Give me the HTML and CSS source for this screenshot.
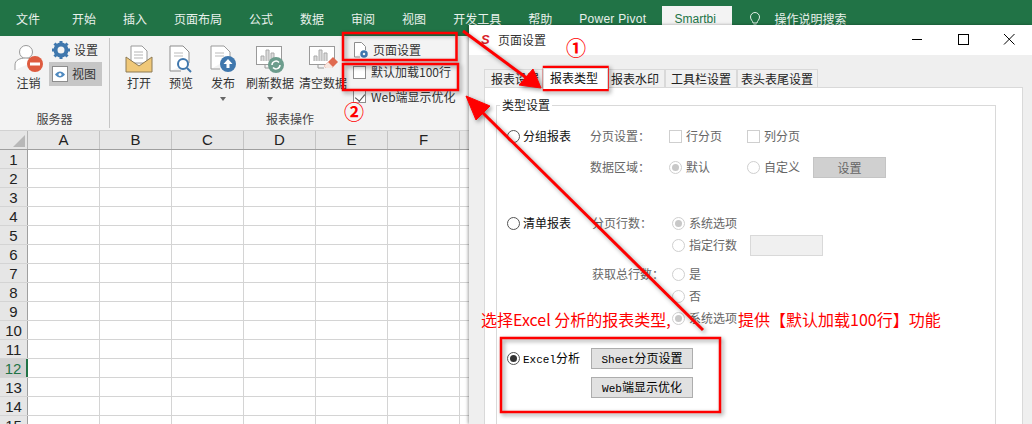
FILE: index.html
```html
<!DOCTYPE html>
<html lang="zh">
<head>
<meta charset="utf-8">
<title>页面设置</title>
<link rel="stylesheet" href="styles.css">
</head>
<body>
<div class="excel">
  <nav class="tabs">
    <span class="t first">文件</span><span class="t">开始</span><span class="t">插入</span><span class="t">页面布局</span><span class="t">公式</span><span class="t">数据</span><span class="t">审阅</span><span class="t">视图</span><span class="t">开发工具</span><span class="t">帮助</span><span class="t pp">Power Pivot</span><span class="t active">Smartbi</span>
    <svg class="bulb" width="14" height="16" viewBox="0 0 14 16"><path d="M5 12c0-2-2.500-3-2.500-6a4.500 4.500 0 0 1 9 0c0 3-2.500 4-2.500 6zM5.500 14h3" fill="none" stroke="#e4efe8"/></svg>
    <span class="t search">操作说明搜索</span>
  </nav>
  <section class="ribbon">
    <div class="group g1">
      <div class="gbody">
        <div class="big w40">
          <svg class="ico" width="30" height="30" viewBox="0 0 30 30"><circle cx="12" cy="8" r="6.500" fill="#fff" stroke="#9a9a9a"/><path d="M1 26v-5c0-5 5-7 11-7 4 0 7 1 9 3" fill="#fff" stroke="#9a9a9a"/><circle cx="21" cy="20" r="8" fill="#de5b3f"/><rect x="16" y="18.500" width="10" height="3" fill="#fff"/></svg>
          <span>注销</span>
        </div>
        <div class="smalls">
          <div class="small"><svg width="18" height="18" viewBox="0 0 18 18"><circle cx="9" cy="9" r="5.500" fill="none" stroke="#3f77ad" stroke-width="4"/><path d="M9 0v3M9 15v3M0 9h3M15 9h3M2.500 2.500l2 2M13.500 13.500l2 2M2.500 15.500l2-2M13.500 4.500l2-2" stroke="#3f77ad" stroke-width="3"/></svg><span>设置</span></div>
          <div class="small on"><svg width="16" height="16" viewBox="0 0 16 16"><rect x=".5" y=".5" width="15" height="15" fill="#fff" stroke="#8d8d8d"/><path d="M3 8.500c3-4 7-4 10 0-3 4-7 4-10 0z" fill="#4f8ac0"/><circle cx="8" cy="8.500" r="1.500" fill="#fff"/></svg><span>视图</span></div>
        </div>
      </div>
      <div class="glabel">服务器</div>
    </div>
    <div class="group g2">
      <div class="gbody">
        <div class="big w42">
          <svg class="ico" width="28" height="30" viewBox="0 0 28 30"><path d="M6 19V2h11l5 5v12z" fill="#fff" stroke="#9a9a9a"/><path d="M9 8h9M9 11h9M9 14h9" stroke="#b5b5b5"/><path d="M1 13v15h26V13l-13 9z" fill="#f0c878" stroke="#8d7a55"/></svg>
          <span>打开</span>
        </div>
        <div class="big w42">
          <svg class="ico" width="28" height="30" viewBox="0 0 28 30"><path d="M3 27V2h13l6 6v11" fill="#fff" stroke="#8d8d8d"/><path d="M3 27h11" stroke="#8d8d8d"/><path d="M7 9h9M7 12h9" stroke="#bbb"/><circle cx="16" cy="20" r="5" fill="#fff" stroke="#3f77ad" stroke-width="2"/><path d="M20 24l4 4" stroke="#3f77ad" stroke-width="2"/></svg>
          <span>预览</span>
        </div>
        <div class="big w42 drop">
          <svg class="ico" width="30" height="30" viewBox="0 0 30 30"><path d="M3 25V2h13l6 6v6" fill="#fff" stroke="#9a9a9a"/><path d="M3 25h9" stroke="#9a9a9a"/><path d="M7 9h9M7 12h9" stroke="#bbb"/><circle cx="20" cy="20" r="8" fill="#3f77ad"/><path d="M20 15l-4.500 5h3v4h3v-4h3z" fill="#fff"/></svg>
          <span>发布</span><i class="caret"></i>
        </div>
        <div class="big w52 drop">
          <svg class="ico" width="30" height="30" viewBox="0 0 30 30"><rect x="1.500" y="2.500" width="25" height="18" fill="#fff" stroke="#9a9a9a"/><path d="M6 17v-5h3v5M11 17V6h3v11M16 17V9h3v8" fill="#ddd" stroke="#aaa"/><path d="M10 21v3h8" stroke="#9a9a9a" fill="none"/><circle cx="21" cy="21" r="8" fill="#6d9d8d"/><path d="M17 21a4 4 0 0 1 7-2.500M25 21a4 4 0 0 1-7 2.500" fill="none" stroke="#fff" stroke-width="1.500"/></svg>
          <span>刷新数据</span><i class="caret"></i>
        </div>
        <div class="big w54">
          <svg class="ico" width="30" height="30" viewBox="0 0 30 30"><rect x="1.500" y="2.500" width="25" height="18" fill="#fff" stroke="#9a9a9a"/><path d="M6 17v-5h3v5M11 17V6h3v11M16 17V9h3v8" fill="#ddd" stroke="#aaa"/><path d="M10 21v3h6" stroke="#9a9a9a" fill="none"/><path d="M16 22l9-9 5 5-6 6h-6z" fill="#e0694f"/><path d="M16 22l4-4 5 5-1 1h-6z" fill="#f6e6df"/></svg>
          <span>清空数据</span>
        </div>
        <div class="smalls s2">
          <div class="small r1"><svg width="16" height="18" viewBox="0 0 16 18"><path d="M1.500 16V1.500h7l4 4V9" fill="#fff" stroke="#8d8d8d"/><path d="M1.500 16H7" stroke="#8d8d8d"/><circle cx="11" cy="13" r="2.500" fill="none" stroke="#3f77ad" stroke-width="2.500"/></svg><span>页面设置</span></div>
          <div class="small r2"><i class="box"></i><span>默认加载100行</span></div>
          <div class="small r3"><i class="box tick"></i><span>Web端显示优化</span></div>
        </div>
      </div>
      <div class="glabel">报表操作</div>
    </div>
  </section>
  <section class="sheet">
    <div class="hrow"><div class="corner"><i></i></div><b>A</b><b>B</b><b>C</b><b>D</b><b>E</b><b>F</b><b>G</b></div>
    <div class="row"><div class="rh">1</div></div>
    <div class="row"><div class="rh">2</div></div>
    <div class="row"><div class="rh">3</div></div>
    <div class="row"><div class="rh">4</div></div>
    <div class="row"><div class="rh">5</div></div>
    <div class="row"><div class="rh">6</div></div>
    <div class="row"><div class="rh">7</div></div>
    <div class="row"><div class="rh">8</div></div>
    <div class="row"><div class="rh">9</div></div>
    <div class="row"><div class="rh">10</div></div>
    <div class="row"><div class="rh">11</div></div>
    <div class="row"><div class="rh sel">12</div></div>
    <div class="row"><div class="rh">13</div></div>
    <div class="row"><div class="rh">14</div></div>
    <div class="row"><div class="rh">15</div></div>
  </section>
</div>

<div class="dialog">
  <header class="title">
    <span class="logo">S</span><span class="ttext">页面设置</span>
    <div class="wins">
      <svg width="46" height="30" viewBox="0 0 46 30"><path d="M18 14.500h10" stroke="#000"/></svg>
      <svg width="46" height="30" viewBox="0 0 46 30"><rect x="18.500" y="9.500" width="10" height="10" fill="none" stroke="#000"/></svg>
      <svg width="46" height="30" viewBox="0 0 46 30"><path d="M18 9l10.500 10.500M28.500 9L18 19.500" stroke="#000"/></svg>
    </div>
  </header>
  <div class="dbody">
    <div class="dtabs">
      <span class="dt">报表设置</span><span class="dt cur">报表类型</span><span class="dt">报表水印</span><span class="dt">工具栏设置</span><span class="dt">表头表尾设置</span>
    </div>
    <div class="panel">
      <fieldset class="fs">
        <legend>类型设置</legend>
        <div class="fr f1"><label class="main"><i class="radio"></i>分组报表</label><span class="lab">分页设置：</span><span class="opt"><i class="cb"></i>行分页</span><span class="opt"><i class="cb"></i>列分页</span></div>
        <div class="fr f2"><span class="main"></span><span class="lab">数据区域：</span><span class="opt"><i class="radio dis dot"></i>默认</span><span class="opt w66"><i class="radio dis"></i>自定义</span><span class="gbtn">设置</span></div>
        <div class="fr f3"><label class="main"><i class="radio"></i>清单报表</label><span class="lab lab2">分页行数：</span><span class="opt"><i class="radio dis dot"></i>系统选项</span></div>
        <div class="fr"><span class="main"></span><span class="lab lab2"></span><span class="opt"><i class="radio dis"></i>指定行数</span><span class="inp"></span></div>
        <div class="fr f5"><span class="main"></span><span class="lab lab2">获取总行数：</span><span class="opt"><i class="radio dis"></i>是</span></div>
        <div class="fr"><span class="main"></span><span class="lab lab2"></span><span class="opt"><i class="radio dis"></i>否</span></div>
        <div class="fr"><span class="main"></span><span class="lab lab2"></span><span class="opt"><i class="radio dis dot"></i>系统选项</span></div>
        <div class="fr f8"><label class="main blk"><i class="radio dark"></i><span><span class="lat">Excel</span>分析</span></label><span class="wbtn"><span class="lat">Sheet</span>分页设置</span></div>
        <div class="fr f9"><span class="main"></span><span class="wbtn"><span class="lat">Web</span>端显示优化</span></div>
      </fieldset>
    </div>
  </div>
</div>

<svg class="marks" width="1032" height="424" viewBox="0 0 1032 424">
  <g fill="none" stroke="#f00" stroke-width="2.500">
    <rect x="343" y="33" width="113.500" height="27"/>
    <rect x="343" y="64" width="115" height="26"/>
    <rect x="544" y="67" width="63.500" height="23"/>
    <rect x="501" y="338" width="219" height="74"/>
  </g>
  <g fill="#f00" stroke="#f00">
    <path d="M463 31L528 79" stroke-width="3" fill="none"/>
    <path d="M541 88L519 85L533 69z" stroke-width="1"/>
    <path d="M703 330L480 110" stroke-width="3" fill="none"/>
    <path d="M466 96L490 106L476 120z" stroke-width="1"/>
  </g>
</svg>
<span class="num n1">①</span>
<span class="num n2">②</span>
<div class="note n-a">选择Excel 分析的报表类型,</div>
<div class="note n-b">提供【默认加载100行】功能</div>
</body>
</html>
```
FILE: styles.css
```css
* { box-sizing: border-box; }
html, body { margin: 0; height: 424px; overflow: hidden; background: #fff; }
body { position: relative; width: 1032px; font: 12px/16px "Noto Sans CJK SC", "Liberation Sans", sans-serif; color: #333; }
i { font-style: normal; display: block; flex: none; }

.tabs { height: 36px; background: #217346; color: #e9f1ec; display: flex; align-items: flex-start; padding: 11px 0 0 16px; }
.t { margin-right: 27px; white-space: nowrap; }
.t.first { margin-right: 32px; }
.t.pp { margin-right: 16px; font-family: "Liberation Sans", sans-serif; letter-spacing: .3px; }
.t.active { background: #f3f3f3; color: #217346; margin: -5px 16px 0 0; height: 30px; padding: 5px 12px 0; width: 70px; font-family: "Liberation Sans", sans-serif; }
.bulb { margin: 0 12px 0 0; flex: none; }
.t.search { margin: 0; }

.ribbon { height: 95px; background: #f3f3f3; border-bottom: 1px solid #d2d2d2; display: flex; color: #333; }
.group { display: flex; flex-direction: column; height: 90px; margin-top: 2px; }
.g1 { width: 110px; padding-left: 8px; border-right: 1px solid #c6c6c6; }
.g2 { width: 360px; padding-left: 8px; }
.gbody { display: flex; height: 70px; }
.glabel { margin: 3px 0 0 -8px; height: 16px; text-align: center; color: #444; }
.big { display: flex; flex-direction: column; align-items: center; padding-top: 6px; white-space: nowrap; }
.big span { margin-top: 1px; }
.ico { display: block; flex: none; }
.w40 { width: 41px; }
.w42 { width: 42px; }
.w52 { width: 52px; }
.w54 { width: 54px; }
.caret { width: 0; height: 0; margin-top: 6px; border: 3px solid transparent; border-top: 4px solid #666; border-bottom: 0; }
.smalls { display: flex; flex-direction: column; }
.small { display: flex; align-items: center; gap: 4px; height: 24px; padding-left: 3px; white-space: nowrap; }
.small.on { width: 53px; background: #c6c6c6; }
.s2 .small { padding-left: 3px; }
.small.r1 { height: 22px; margin-top: 1px; }
.small.r2 { height: 22px; gap: 5px; }
.small.r3 { height: 24px; gap: 5px; padding-top: 3px; }
.box { width: 13px; height: 13px; border: 1px solid #8d8d8d; background: #fff; position: relative; }
.box.tick::after { content: ""; position: absolute; left: 3px; top: 1px; width: 5px; height: 8px; border: solid #555; border-width: 0 1px 1px 0; transform: rotate(40deg); }

.sheet { font-family: "Liberation Sans", sans-serif; font-size: 15px; color: #222; }
.hrow { height: 19px; display: flex; background: #e6e6e6; border-bottom: 1px solid #9f9f9f; }
.corner { width: 28px; border-right: 1px solid #b5b5b5; position: relative; }
.corner i { position: absolute; right: 2px; bottom: 2px; border: 6px solid #b8b8b8; border-top-color: transparent; border-left-color: transparent; }
.hrow b { width: 72px; flex: none; font-weight: 400; text-align: center; line-height: 18px; border-right: 1px solid #c4c4c4; }
.row { height: 19px; display: flex; background: repeating-linear-gradient(90deg, #fff 0 71px, #d4d4d4 71px 72px) 28px 0; border-bottom: 1px solid #d4d4d4; }
.rh { width: 28px; height: 18px; background: #e6e6e6; border-right: 1px solid #9f9f9f; text-align: center; line-height: 19px; }
.rh.sel { background: #d2d2d2; color: #217346; border-right: 2px solid #217346; }

.dialog { position: absolute; left: 469px; top: 25px; width: 563px; height: 399px; background: #efefef; box-shadow: -1px 0 3px rgba(0,0,0,.35); color: #666; overflow: hidden; }
.title { height: 30px; background: #fff; display: flex; align-items: center; color: #333; }
.logo { margin-left: 12px; width: 17px; color: #d8232a; font: italic 700 13px/16px "Liberation Sans", sans-serif; }
.ttext { flex: 1; }
.wins { display: flex; }
.wins svg { display: block; }

.dbody { padding: 14px 9px 0 15px; }
.dtabs { display: flex; height: 19px; color: #222; }
.dt { height: 19px; padding: 1px 6px 0; background: #f0f0f0; border: 1px solid #d9d9d9; white-space: nowrap; }
.dt:nth-child(1) { width: 59px; }
.dt.cur { background: #fff; border-bottom: 0; height: 21px; margin-top: -1px; width: 65px; padding: 1px 6px 0; position: relative; z-index: 1; color: #111; }
.dt:nth-child(3) { width: 57px; padding-left: 2px; padding-right: 0; }
.dt:nth-child(4) { width: 72px; padding-left: 5px; padding-right: 0; }
.dt:nth-child(5) { width: 81px; padding-left: 3px; padding-right: 0; }
.panel { background: #fff; border: 1px solid #d9d9d9; height: 380px; padding: 9px 26px 0 11px; margin-top: -1px; }
.fs { margin: 0; padding: 0 0 0 10px; height: 360px; border: 1px solid #d9d9d9; min-width: 0; }
.fs legend { padding: 0 2px; margin-left: -7px; color: #222; line-height: 16px; }
.fr { display: flex; align-items: center; height: 22px; white-space: nowrap; }
.f1 { margin-top: 12px; }
.f2 { margin-top: 9px; }
.f3 { margin-top: 34px; }
.f5 { margin-top: 7px; }
.f8 { margin-top: 19px; height: 21px; }
.f9 { margin-top: 8px; height: 21px; }
.f8 .main, .f9 .main { width: 84px; }
.main { width: 83px; flex: none; display: flex; align-items: center; gap: 3px; color: #111; }
.lab { width: 79px; flex: none; }
.lab2 { padding-left: 2px; width: 82px; }
.opt { width: 78px; flex: none; display: flex; align-items: center; gap: 4px; }
.w66 { width: 66px; }
.radio { width: 13px; height: 13px; border: 1.500px solid #555; border-radius: 50%; background: #fff; position: relative; }
.radio.dis { border: 1px solid #cfcfcf; }
.radio.dot::after, .radio.dark::after { content: ""; position: absolute; left: 2px; top: 2px; width: 7px; height: 7px; border-radius: 50%; background: #c8c8c8; }
.radio.dark::after { background: #333; left: 1.500px; top: 1.500px; }
.cb { width: 13px; height: 13px; border: 1px solid #cfcfcf; background: #fff; }
.gbtn { width: 73px; height: 21px; background: #d0d0d0; border: 1px solid #c4c4c4; text-align: center; line-height: 19px; }
.inp { width: 73px; height: 21px; background: #f0f0f0; border: 1px solid #d9d9d9; }
.blk { color: #000; }
.lat { font: 11px/16px "Liberation Mono", monospace; }
.wbtn { width: 102px; height: 21px; background: #e1e1e1; border: 1px solid #adadad; color: #000; text-align: center; line-height: 18px; }

.marks { position: absolute; left: 0; top: 0; filter: drop-shadow(2px 2px 2px rgba(0,0,0,.4)); }
.num { position: absolute; color: #f00; font: 700 20px/22px "Noto Sans CJK SC", sans-serif; text-shadow: 0 0 2px #fff; }
.n1 { left: 566px; top: 37px; }
.n2 { left: 344px; top: 101px; }
.note { position: absolute; top: 309px; color: #f00; font-size: 16px; line-height: 20px; white-space: nowrap; }
.n-a { left: 481px; }
.n-b { left: 738px; }
```
